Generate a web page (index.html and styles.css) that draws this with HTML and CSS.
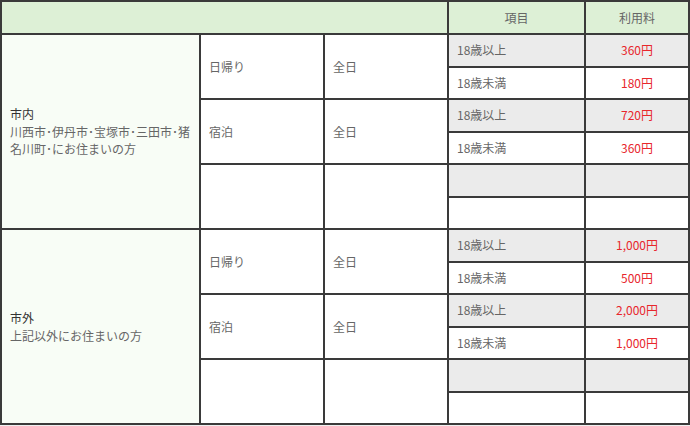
FILE: index.html
```html
<!DOCTYPE html>
<html lang="ja">
<head>
<meta charset="utf-8">
<link rel="stylesheet" href="styles.css">
</head>
<body>
<table class="fees">
  <colgroup>
    <col class="c-area">
    <col class="c-type">
    <col class="c-time">
    <col class="c-item">
    <col class="c-fee">
  </colgroup>
  <thead>
    <tr class="head">
      <th colspan="3"></th>
      <th class="center">項目</th>
      <th class="center">利用料</th>
    </tr>
  </thead>
  <tbody>
    <tr>
      <td class="area" rowspan="6"><span class="area-name">市内</span><br>川西市･伊丹市･宝塚市･三田市･猪名川町･にお住まいの方</td>
      <td rowspan="2">日帰り</td>
      <td rowspan="2">全日</td>
      <td class="gray">18歳以上</td>
      <td class="gray price">360円</td>
    </tr>
    <tr>
      <td>18歳未満</td>
      <td class="price">180円</td>
    </tr>
    <tr>
      <td rowspan="2">宿泊</td>
      <td rowspan="2">全日</td>
      <td class="gray">18歳以上</td>
      <td class="gray price">720円</td>
    </tr>
    <tr>
      <td>18歳未満</td>
      <td class="price">360円</td>
    </tr>
    <tr>
      <td rowspan="2"></td>
      <td rowspan="2"></td>
      <td class="gray"></td>
      <td class="gray price"></td>
    </tr>
    <tr>
      <td></td>
      <td class="price"></td>
    </tr>
    <tr>
      <td class="area" rowspan="6"><span class="area-name">市外</span><br>上記以外にお住まいの方</td>
      <td rowspan="2">日帰り</td>
      <td rowspan="2">全日</td>
      <td class="gray">18歳以上</td>
      <td class="gray price">1,000円</td>
    </tr>
    <tr>
      <td>18歳未満</td>
      <td class="price">500円</td>
    </tr>
    <tr>
      <td rowspan="2">宿泊</td>
      <td rowspan="2">全日</td>
      <td class="gray">18歳以上</td>
      <td class="gray price">2,000円</td>
    </tr>
    <tr>
      <td>18歳未満</td>
      <td class="price">1,000円</td>
    </tr>
    <tr>
      <td rowspan="2"></td>
      <td rowspan="2"></td>
      <td class="gray"></td>
      <td class="gray price"></td>
    </tr>
    <tr>
      <td></td>
      <td class="price"></td>
    </tr>
  </tbody>
</table>
</body>
</html>
```

FILE: styles.css
```css
html, body {
  margin: 0;
  padding: 0;
}
body {
  background: #efefef;
  font-family: "Noto Sans CJK JP", "Noto Sans", sans-serif;
  font-size: 12px;
  color: #666;
}
.fees {
  width: 688px;
  table-layout: fixed;
  border-collapse: collapse;
  background: #fff;
}
.c-area { width: 199px; }
.c-type { width: 124px; }
.c-time { width: 124px; }
.c-item { width: 137px; }
.c-fee { width: 104px; }
.fees th,
.fees td {
  border: 2px solid #3a3a3a;
  padding: 0 8px;
  text-align: left;
  vertical-align: middle;
  font-weight: normal;
  line-height: 18px;
}
.head th {
  background: #ddf0d6;
  height: 31px;
  font-weight: normal;
  color: #666;
}
.fees th.center {
  text-align: center;
}
.fees tbody tr {
  height: 32.5px;
}
.fees td.area {
  background: #f8fdf6;
  line-height: 17.5px;
}
.area-name {
  color: #333;
}
.fees td.gray {
  background: #ebebeb;
}
.fees td.price {
  text-align: center;
  color: #e8262c;
}
```
